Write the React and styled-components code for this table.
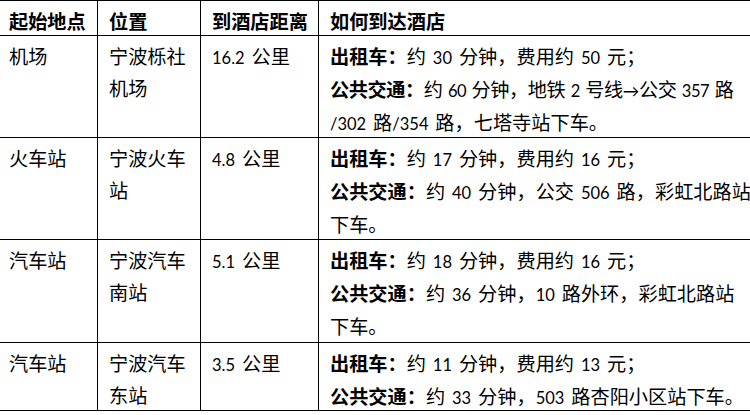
import styled, { createGlobalStyle } from 'styled-components'

const GlobalStyle = createGlobalStyle`
  html, body {
    margin: 0;
    padding: 0;
    background: #fff;
  }
`

const headings = ['起始地点', '位置', '到酒店距离', '如何到达酒店'];

// [bold label, text, squeeze the line a little to fit]
const rows = [
  {
    from: '机场',
    place: ['宁波栎社', '机场'],
    distance: '16.2 公里',
    route: [
      ['出租车：', '约 30 分钟，费用约 50 元；'],
      ['公共交通：', '约 60 分钟，地铁 2 号线→公交 357 路', true],
      ['', '/302 路/354 路，七塔寺站下车。'],
    ],
  },
  {
    from: '火车站',
    place: ['宁波火车', '站'],
    distance: '4.8 公里',
    route: [
      ['出租车：', '约 17 分钟，费用约 16 元；'],
      ['公共交通：', '约 40 分钟，公交 506 路，彩虹北路站'],
      ['', '下车。'],
    ],
  },
  {
    from: '汽车站',
    place: ['宁波汽车', '南站'],
    distance: '5.1 公里',
    route: [
      ['出租车：', '约 18 分钟，费用约 16 元；'],
      ['公共交通：', '约 36 分钟，10 路外环，彩虹北路站'],
      ['', '下车。'],
    ],
  },
  {
    from: '汽车站',
    place: ['宁波汽车', '东站'],
    distance: '3.5 公里',
    route: [
      ['出租车：', '约 11 分钟，费用约 13 元；'],
      ['公共交通：', '约 33 分钟，503 路杏阳小区站下车。'],
    ],
  },
];

const Table = styled.div`
  display: grid;
  grid-template-columns: 97px 102px 117px 431px;
  grid-template-rows: 34px 101px 101px 102px 67px;
  gap: 1px;
  width: 750px;
  background: #000;
  border-top: 1px solid #000;
  border-bottom: 1px solid #000;
  font-family: "Lato", "Noto Sans CJK SC", sans-serif;
  font-size: 19.2px;
  color: #000;
`

const Cell = styled.div`
  background: #fff;
  padding: ${({ $head }) => ($head ? '8px' : '5px')} 4px 0 11px;
  line-height: ${({ $head }) => ($head ? '26px' : '32px')};
  font-weight: ${({ $head }) => ($head ? 700 : 400)};
  white-space: nowrap;
  word-spacing: 2px;

  &:nth-child(4n + 1) {
    padding-left: 9px;
  }
`

const Line = styled.div`
  letter-spacing: ${({ $tight }) => ($tight ? '-0.45px' : 'normal')};
  word-spacing: ${({ $tight }) => ($tight ? '1px' : '2px')};
`

const Label = styled.span`
  font-weight: 700;
`

// digits and latin bits are set a little smaller, like Calibri next to SimSun
const Latin = styled.span`
  font-size: 16.5px;
`

const latinRun = /([0-9A-Za-z./→]+)/;

const withLatin = (text) =>
  text.split(latinRun).map((part, i) =>
    i % 2 === 1 ? <Latin key={i}>{part}</Latin> : part
  );

export default function App() {
  return (
    <>
      <GlobalStyle />
      <Table>
        {headings.map((h) => (
          <Cell $head key={h}>{h}</Cell>
        ))}
        {rows.map((row, r) => [
          <Cell key={`${r}-from`}>{row.from}</Cell>,
          <Cell key={`${r}-place`}>
            {row.place.map((p) => (
              <Line key={p}>{p}</Line>
            ))}
          </Cell>,
          <Cell key={`${r}-dist`}>{withLatin(row.distance)}</Cell>,
          <Cell key={`${r}-route`}>
            {row.route.map(([label, text, tight], i) => (
              <Line key={i} $tight={tight}>
                {label && <Label>{label}</Label>}
                {withLatin(text)}
              </Line>
            ))}
          </Cell>,
        ])}
      </Table>
    </>
  );
}
